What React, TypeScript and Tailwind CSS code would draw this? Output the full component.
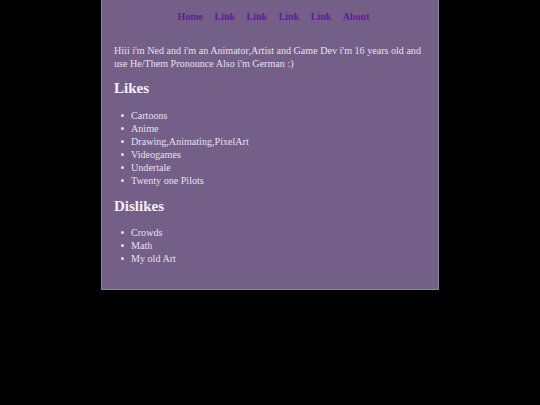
import React from 'react';

const likes = ['Cartoons', 'Anime', 'Drawing,Animating,PixelArt', 'Videogames', 'Undertale', 'Twenty one Pilots'];
const dislikes = ['Crowds', 'Math', 'My old Art'];
const links = ['Home', 'Link', 'Link', 'Link', 'Link', 'About'];

const List = ({ items }: { items: string[] }) => (
  <ul>
    {items.map((item) => (
      <li key={item} className="flex items-center">
        <span className="ml-[7px] mr-[7px] h-[3px] w-[3px] rounded-full bg-[#e6e1ea]" />
        <span>{item}</span>
      </li>
    ))}
  </ul>
);

const App: React.FC = () => {
  return (
    <div className="min-h-[405px] bg-black font-['Liberation_Serif',serif] text-[10.1px] leading-[13px]">
      <div className="mx-auto w-[338px] bg-[#735f87] border-x border-b border-[#8a8a8a] px-[12px] pt-[10px] pb-[24px] text-[#e6e1ea]">
        <nav className="flex justify-center gap-[11.5px] pl-[7px] text-[10px] font-bold text-[#6419a0]">
          {links.map((l, i) => (
            <a key={i} href="#">{l}</a>
          ))}
        </nav>

        <p className="mt-[21px]">
          Hiii i'm Ned and i'm an Animator,Artist and Game Dev i'm 16 years old and use He/Them Pronounce Also i'm German :)
        </p>

        <h2 className="mt-[9px] text-[15px] leading-[18px] font-bold text-[#f2eff4]">Likes</h2>
        <div className="mt-[11.5px]">
          <List items={likes} />
        </div>

        <h2 className="mt-[10.5px] text-[15px] leading-[18px] font-bold text-[#f2eff4]">Dislikes</h2>
        <div className="mt-[10.5px]">
          <List items={dislikes} />
        </div>
      </div>
    </div>
  );
};

export default App;
